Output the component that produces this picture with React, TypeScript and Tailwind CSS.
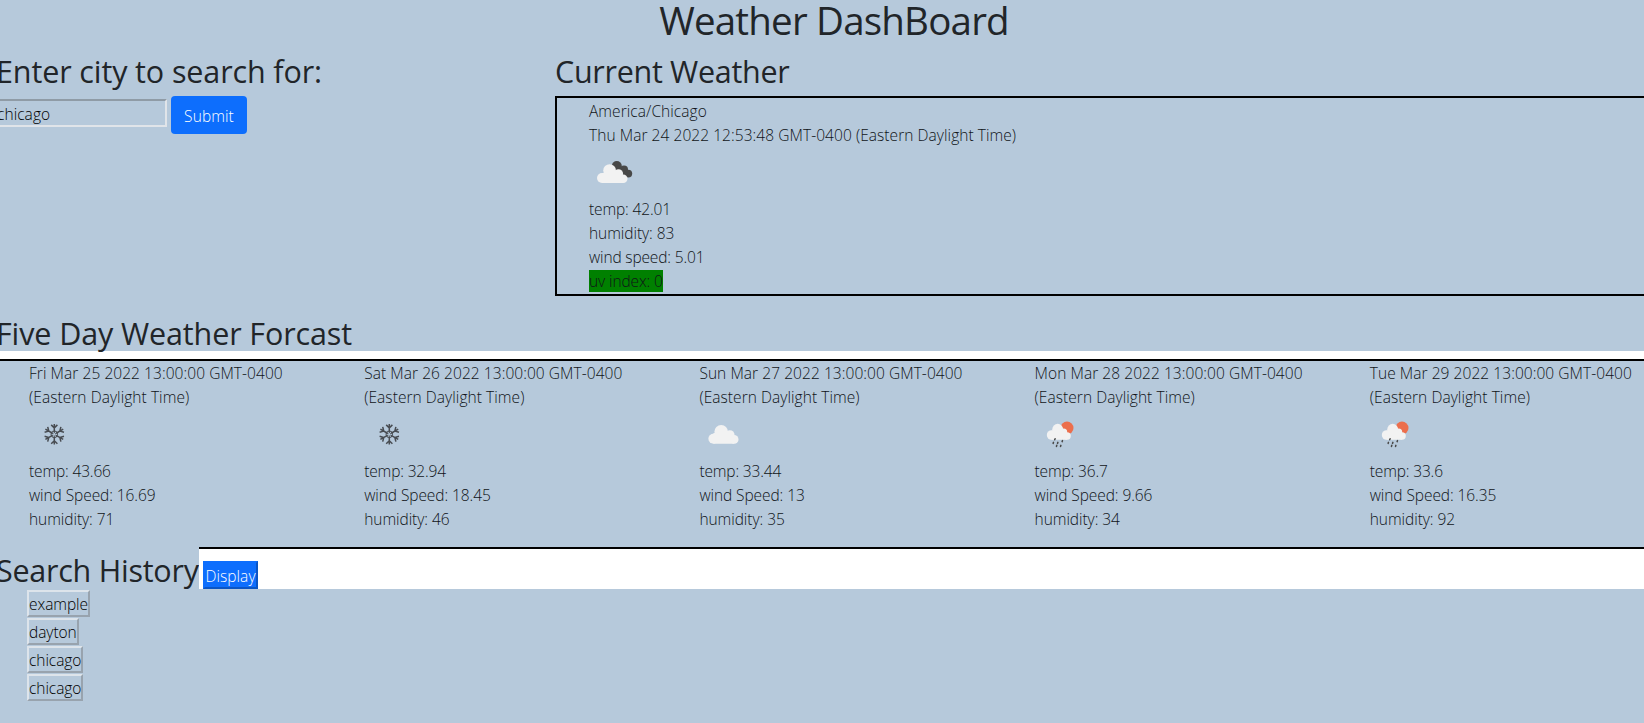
import React from "react";

const cities = ["example", "dayton", "chicago", "chicago"];

const forecast = [
  { date: "Fri Mar 25 2022 13:00:00 GMT-0400", icon: "snow", temp: "43.66", wind: "16.69", humidity: "71" },
  { date: "Sat Mar 26 2022 13:00:00 GMT-0400", icon: "snow", temp: "32.94", wind: "18.45", humidity: "46" },
  { date: "Sun Mar 27 2022 13:00:00 GMT-0400", icon: "cloud", temp: "33.44", wind: "13", humidity: "35" },
  { date: "Mon Mar 28 2022 13:00:00 GMT-0400", icon: "rain", temp: "36.7", wind: "9.66", humidity: "34" },
  { date: "Tue Mar 29 2022 13:00:00 GMT-0400", icon: "rain", temp: "33.6", wind: "16.35", humidity: "92" },
];

function SnowIcon() {
  return (
    <g transform="translate(25.3 25.3)" stroke="#484c52" strokeWidth="1.5" fill="none">
      {[0, 60, 120, 180, 240, 300].map((angle) => (
        <g key={angle} transform={`rotate(${angle})`}>
          <path d="M0 -2.6V-10.3M-3.1 -9.4L0 -6.4L3.1 -9.4" />
          <path d="M-1.7 -3L1.7 -3M0 -2.6V-1.2" strokeWidth="1" />
        </g>
      ))}
    </g>
  );
}

function CloudIcon() {
  return (
    <g fill="#f2f2f2">
      <circle cx="14.4" cy="29.7" r="5" />
      <circle cx="22.2" cy="22.8" r="6.8" />
      <circle cx="30.9" cy="25.8" r="4.6" />
      <circle cx="35.2" cy="30.4" r="4.3" />
      <path d="M14.4 24H31V25L35.2 30V34.7H14.4Z" />
    </g>
  );
}

function BrokenCloudsIcon() {
  return (
    <g>
      <g fill="#484848">
        <circle cx="27.8" cy="19" r="5" />
        <circle cx="35" cy="22.6" r="4" />
        <circle cx="39.3" cy="26.6" r="3.9" />
        <path d="M27 20L36 20L39 30H32Z" />
      </g>
      <g fill="#f2f2f2">
        <circle cx="13" cy="31" r="5" />
        <circle cx="20.6" cy="23.6" r="6.4" />
        <circle cx="29.5" cy="26.8" r="4.6" />
        <circle cx="34.3" cy="31.8" r="4.2" />
        <path d="M13 26H29V27L34.3 32V36H13Z" />
      </g>
    </g>
  );
}

function RainIcon() {
  return (
    <g>
      <circle cx="32" cy="19" r="6.5" fill="#ec6e4c" />
      <g fill="#f2f2f2">
        <circle cx="16.6" cy="26" r="4.8" />
        <circle cx="22.7" cy="20.2" r="5.4" />
        <circle cx="28.6" cy="23" r="3.6" />
        <circle cx="32.1" cy="27" r="3.7" />
        <path d="M16.6 21.5H27L32 26V30.7H16.6Z" />
      </g>
      <path
        d="M20.1 29.8L19.7 30.8M18.5 33.4L18.1 34.4M22.9 33.4L22.5 34.4M27.5 31.6L27.1 32.6M21.8 36.4L21.4 37.4M25.9 36.4L25.5 37.4"
        stroke="#484848"
        strokeWidth="1.5"
        strokeLinecap="round"
      />
    </g>
  );
}

function WeatherIcon({ kind }: { kind: string }) {
  return (
    <svg className="block size-[50px]" viewBox="0 0 50 50">
      {kind === "snow" && <SnowIcon />}
      {kind === "cloud" && <CloudIcon />}
      {kind === "broken" && <BrokenCloudsIcon />}
      {kind === "rain" && <RainIcon />}
    </svg>
  );
}

export default function App() {
  return (
    <div className="h-[723px] w-full overflow-hidden bg-[#b6c9db] font-['Open_Sans','Noto_Sans',sans-serif] text-[15.5px] leading-6 font-[350] tracking-[0.06px] text-[#101418]">
      <h1 className="mb-2.5 pl-6 text-center text-[38.5px] leading-10 font-normal tracking-[-0.8px] text-[#212529]">
        Weather DashBoard
      </h1>

      <div className="flex h-[246px]">
        <section className="w-[555px] shrink-0">
          <h2 className="mb-1 -ml-1 text-[30.5px] leading-[42px] font-normal tracking-[-0.12px] text-[#212529]">
            Enter city to search for:
          </h2>
          <form className="-ml-[5px] flex items-start" onSubmit={(e) => e.preventDefault()}>
            <input
              className="mt-[3px] h-7 w-[172px] border-2 border-t-[#8f9ba6] border-r-[#e0e4e9] border-b-[#e0e4e9] border-l-[#8f9ba6] pt-px text-black outline-none"
              defaultValue="chicago"
            />
            <button className="ml-1 h-[38px] w-19 rounded bg-[#0d6efd] pt-0.5 tracking-[0.1px] text-white">Submit</button>
          </form>
        </section>
        <section className="min-w-0 grow">
          <h2 className="mb-1 text-[30.5px] leading-[42px] font-normal tracking-[-0.3px] text-[#212529]">Current Weather</h2>
          <ul className="-mr-1 h-50 border-2 border-black pt-px pl-8">
            <li>America/Chicago</li>
            <li>Thu Mar 24 2022 12:53:48 GMT-0400 (Eastern Daylight Time)</li>
            <li>
              <WeatherIcon kind="broken" />
            </li>
            <li className="tracking-[-0.13px]">temp: 42.01</li>
            <li className="tracking-[-0.05px]">humidity: 83</li>
            <li className="tracking-[-0.15px]">wind speed: 5.01</li>
            <li className="tracking-[-0.1px]">
              <span className="bg-[#008000]">uv index: 0</span>
            </li>
          </ul>
        </section>
      </div>

      <h2 className="-ml-1 h-[55px] pt-[19px] text-[30.5px] leading-9 font-normal tracking-[-0.12px] text-[#212529]">
        Five Day Weather Forcast
      </h2>
      <div className="h-2 bg-white" />
      <div className="flex h-[190px] border-y-2 border-black pl-[29px]">
        {forecast.map((day) => (
          <ul key={day.date} className="w-[335.2px] shrink-0">
            <li>{day.date}</li>
            <li>(Eastern Daylight Time)</li>
            <li>
              <WeatherIcon kind={day.icon} />
            </li>
            <li className="tracking-[-0.15px]">temp: {day.temp}</li>
            <li className="tracking-[-0.08px]">wind Speed: {day.wind}</li>
            <li className="tracking-[-0.05px]">humidity: {day.humidity}</li>
          </ul>
        ))}
      </div>

      <div className="-mt-0.5 flex h-[42px]">
        <h2 className="w-[199px] shrink-0 bg-[#b6c9db] pt-0.5 text-[30.5px] leading-[42px] font-normal tracking-[-0.25px] whitespace-nowrap text-[#212529]">
          <span className="-ml-1">Search History</span>
        </h2>
        <div className="flex grow items-end border-t-2 border-black bg-white pl-1">
          <button className="flex h-7 w-[55px] justify-center border-2 border-t-[#0d6efd] border-r-[#0a55c4] border-b-[#0a55c4] border-l-[#0d6efd] bg-[#0d6efd] pt-px leading-6 text-white">
            Display
          </button>
        </div>
      </div>
      <ul className="flex flex-col items-start pt-px pl-[27px]">
        {cities.map((city, i) => (
          <li key={i} className="h-7">
            <button className="block h-[27px] border-2 border-t-[#dde4eb] border-r-[#98a3ae] border-b-[#98a3ae] border-l-[#dde4eb] pt-px leading-[23px] tracking-[-0.05px] text-black">
              {city}
            </button>
          </li>
        ))}
      </ul>
    </div>
  );
}
